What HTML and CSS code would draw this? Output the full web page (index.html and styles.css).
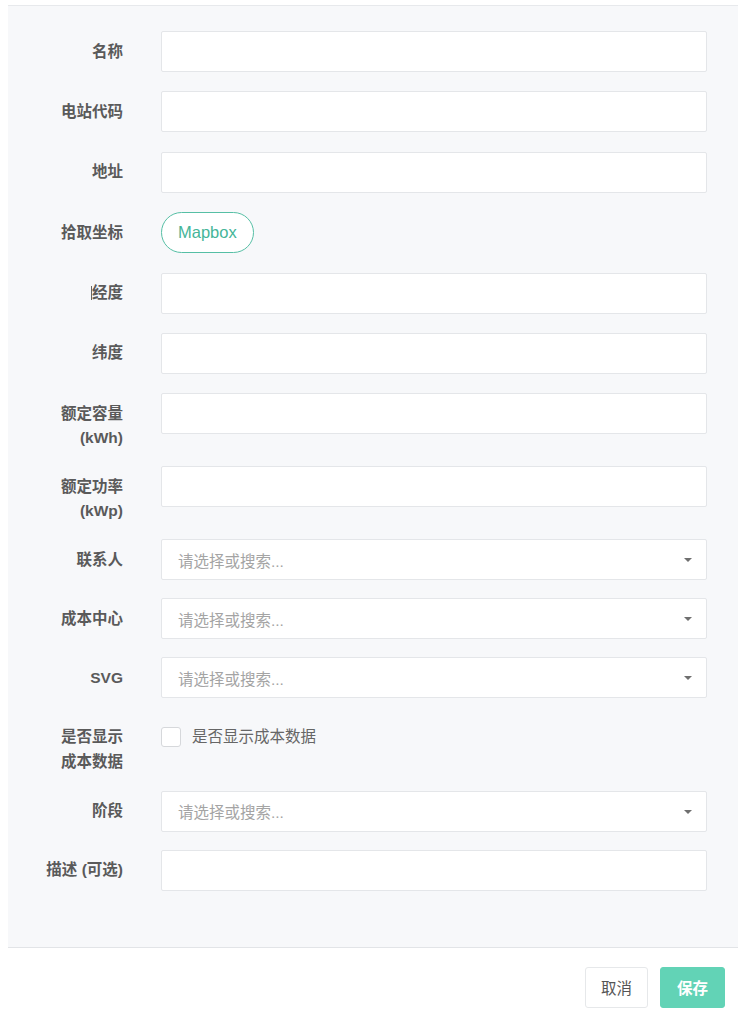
FILE: index.html
```html
<!DOCTYPE html>
<html lang="zh-CN">
<head>
<meta charset="utf-8">
<title>电站</title>
<link rel="stylesheet" href="styles.css">
</head>
<body>
<div class="page">
  <form class="panel">
    <div class="row">
      <label class="label">名称</label>
      <div class="control"><div class="input"></div></div>
    </div>
    <div class="row">
      <label class="label">电站代码</label>
      <div class="control"><div class="input"></div></div>
    </div>
    <div class="row">
      <label class="label">地址</label>
      <div class="control"><div class="input"></div></div>
    </div>
    <div class="row">
      <label class="label">拾取坐标</label>
      <div class="control"><button type="button" class="pill">Mapbox</button></div>
    </div>
    <div class="row">
      <label class="label"><span class="cursor"></span>经度</label>
      <div class="control"><div class="input"></div></div>
    </div>
    <div class="row">
      <label class="label">纬度</label>
      <div class="control"><div class="input"></div></div>
    </div>
    <div class="row row-tall">
      <label class="label">额定容量<br>(kWh)</label>
      <div class="control"><div class="input"></div></div>
    </div>
    <div class="row row-tall">
      <label class="label">额定功率<br>(kWp)</label>
      <div class="control"><div class="input"></div></div>
    </div>
    <div class="row row-tight">
      <label class="label">联系人</label>
      <div class="control"><div class="input select"><span class="placeholder">请选择或搜索...</span><span class="caret"></span></div></div>
    </div>
    <div class="row row-tight">
      <label class="label">成本中心</label>
      <div class="control"><div class="input select"><span class="placeholder">请选择或搜索...</span><span class="caret"></span></div></div>
    </div>
    <div class="row">
      <label class="label">SVG</label>
      <div class="control"><div class="input select"><span class="placeholder">请选择或搜索...</span><span class="caret"></span></div></div>
    </div>
    <div class="row row-check">
      <label class="label">是否显示<br>成本数据</label>
      <div class="control check-control">
        <span class="checkbox"></span>
        <span class="check-text">是否显示成本数据</span>
      </div>
    </div>
    <div class="row row-tight">
      <label class="label">阶段</label>
      <div class="control"><div class="input select"><span class="placeholder">请选择或搜索...</span><span class="caret"></span></div></div>
    </div>
    <div class="row row-last">
      <label class="label">描述 (可选)</label>
      <div class="control"><div class="input"></div></div>
    </div>
  </form>
  <div class="footer">
    <button type="button" class="btn btn-cancel">取消</button>
    <button type="button" class="btn btn-save">保存</button>
  </div>
</div>
</body>
</html>
```
FILE: styles.css
```css
html, body {
  margin: 0;
  padding: 0;
  background: #ffffff;
}

body {
  font-family: "Liberation Sans", "Noto Sans CJK SC", sans-serif;
  font-size: 16px;
  color: #555555;
}

.page {
  padding-top: 5px;
  width: 738px;
}

.panel {
  margin: 0 0 0 8px;
  background: #f7f8fa;
  border-top: 1px solid #e7e9ec;
  border-bottom: 1px solid #e2e4e7;
  padding: 25px 31px 56px 0;
  display: flex;
  flex-direction: column;
}

.row {
  display: flex;
  align-items: flex-start;
  margin-bottom: 19.4px;
}

.row-tall {
  margin-bottom: 16.5px;
}

.row-tight {
  margin-bottom: 18px;
}

.row-last {
  margin-bottom: 0;
}

.label {
  width: 115px;
  flex: none;
  text-align: right;
  font-weight: bold;
  font-size: 15.5px;
  line-height: 24px;
  padding-top: 8.5px;
  color: #5a5a5a;
  box-sizing: border-box;
}

.row-check .label {
  padding-top: 6px;
  line-height: 25px;
}

.row-check {
  margin-bottom: 17px;
}

.cursor {
  display: inline-block;
  width: 1px;
  height: 14px;
  background: #666;
  vertical-align: -2px;
}

.control {
  flex: 1;
  margin-left: 38px;
  min-width: 0;
}

.input {
  height: 41px;
  box-sizing: border-box;
  background: #ffffff;
  border: 1px solid #e4e6e9;
  border-radius: 2px;
}

.select {
  display: flex;
  align-items: center;
  justify-content: space-between;
  padding: 0 14px 0 16px;
}

.placeholder {
  color: #a4a4a4;
  font-size: 15.5px;
}

.caret {
  width: 0;
  height: 0;
  border-left: 4px solid transparent;
  border-right: 4px solid transparent;
  border-top: 4px solid #6f6f6f;
  margin-top: 1px;
}

.pill {
  height: 41px;
  box-sizing: border-box;
  padding: 0 16px;
  border: 1px solid #56bfa5;
  border-radius: 21px;
  background: #ffffff;
  color: #45b598;
  font-family: "Liberation Sans", "Noto Sans CJK SC", sans-serif;
  font-size: 16.5px;
  cursor: pointer;
}

.check-control {
  display: flex;
  align-items: center;
  gap: 11px;
  padding-top: 9px;
}

.checkbox {
  width: 20px;
  height: 20px;
  box-sizing: border-box;
  border: 1px solid #d6d8db;
  border-radius: 3px;
  background: #ffffff;
  flex: none;
}

.check-text {
  color: #666666;
  font-size: 15.5px;
  line-height: 20px;
}

.footer {
  display: flex;
  justify-content: flex-end;
  gap: 12px;
  padding: 19px 13px 0 0;
}

.btn {
  height: 41px;
  box-sizing: border-box;
  padding: 0 15px;
  border-radius: 3px;
  font-family: "Liberation Sans", "Noto Sans CJK SC", sans-serif;
  font-size: 15.5px;
  cursor: pointer;
}

.btn-cancel {
  background: #ffffff;
  border: 1px solid #e6e8ea;
  color: #555555;
}

.btn-save {
  background: #62d3b6;
  border: 1px solid #62d3b6;
  color: #ffffff;
  padding: 0 16px;
  font-weight: bold;
}
```
